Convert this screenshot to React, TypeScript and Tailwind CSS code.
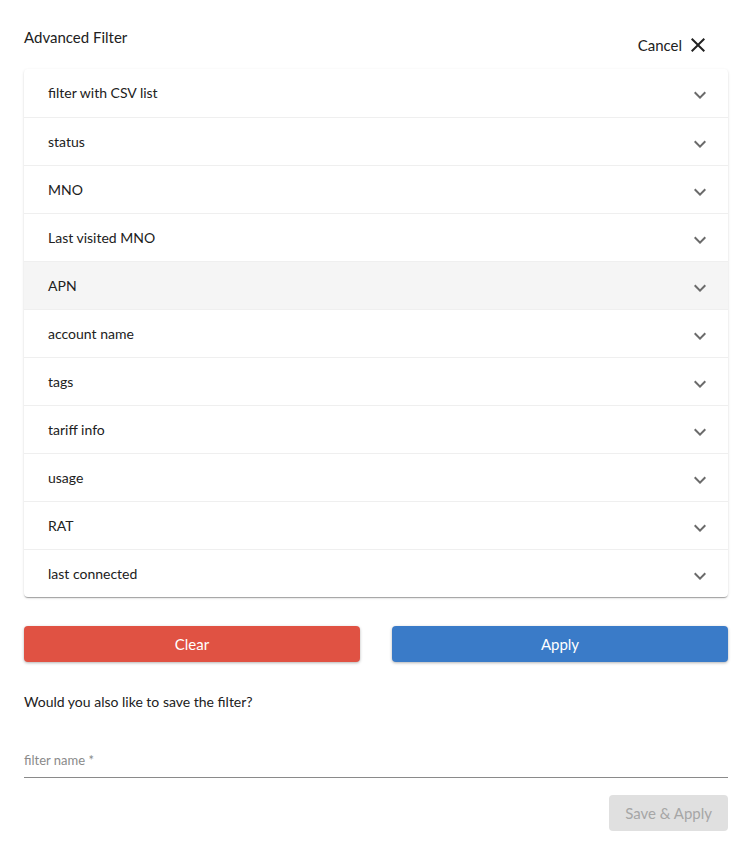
import React from 'react';

const filters = [
  'filter with CSV list',
  'status',
  'MNO',
  'Last visited MNO',
  'APN',
  'account name',
  'tags',
  'tariff info',
  'usage',
  'RAT',
  'last connected',
];

const ExpandIcon = () => (
  <svg viewBox="0 0 24 24" className="w-6 h-6 fill-[#6b6b6b]">
    <path d="M16.59 8.59 12 13.17 7.41 8.59 6 10l6 6 6-6z" />
  </svg>
);

const CloseIcon = () => (
  <svg viewBox="0 0 24 24" className="w-6 h-6 fill-[#222]">
    <path d="M19 6.41 17.59 5 12 10.59 6.41 5 5 6.41 10.59 12 5 17.59 6.41 19 12 13.41 17.59 19 19 17.59 13.41 12z" />
  </svg>
);

export default function App() {
  return (
    <div className="min-h-screen bg-white pl-6 pr-[17px] pt-[26px] font-['Lato','Noto_Sans',sans-serif] text-[#212121]">
      <div className="flex justify-between items-start">
        <h2 className="text-[15px] leading-[22px]">Advanced Filter</h2>
        <button className="flex items-center gap-1 mt-[7px] mr-[18px] text-[15px] leading-[22px]">
          Cancel
          <CloseIcon />
        </button>
      </div>

      <div className="mt-3 rounded bg-white shadow-[0_2px_1px_-1px_rgba(0,0,0,0.2),0_1px_1px_0_rgba(0,0,0,0.14),0_1px_3px_0_rgba(0,0,0,0.12)] overflow-hidden">
        {filters.map((f, i) => (
          <div
            key={f}
            className={`flex items-center justify-between h-12 pl-6 pr-4 text-sm ${
              i > 0 ? 'border-t border-[#efefef]' : ''
            } ${f === 'APN' ? 'bg-[#f5f5f5]' : ''}`}
          >
            <span>{f}</span>
            <span className="pt-1">
              <ExpandIcon />
            </span>
          </div>
        ))}
      </div>

      <div className="grid grid-cols-2 gap-8 mt-[29px]">
        <button className="h-9 rounded bg-[#e05243] text-white text-[15px] shadow-[0_1px_3px_rgba(0,0,0,0.3)]">
          Clear
        </button>
        <button className="h-9 rounded bg-[#3a7bc8] text-white text-[15px] shadow-[0_1px_3px_rgba(0,0,0,0.3)]">
          Apply
        </button>
      </div>

      <p className="mt-[30px] text-sm leading-5">Would you also like to save the filter?</p>

      <div className="mt-[31px] border-b border-[#8a8a8a] pb-[6px] pt-1">
        <span className="text-[13px] text-[#8a8a8a]">filter name *</span>
      </div>

      <div className="flex justify-end mt-[17px]">
        <button className="h-9 px-4 rounded bg-[#e0e0e0] text-[#a6a6a6] text-[15px]">Save &amp; Apply</button>
      </div>
    </div>
  );
}
